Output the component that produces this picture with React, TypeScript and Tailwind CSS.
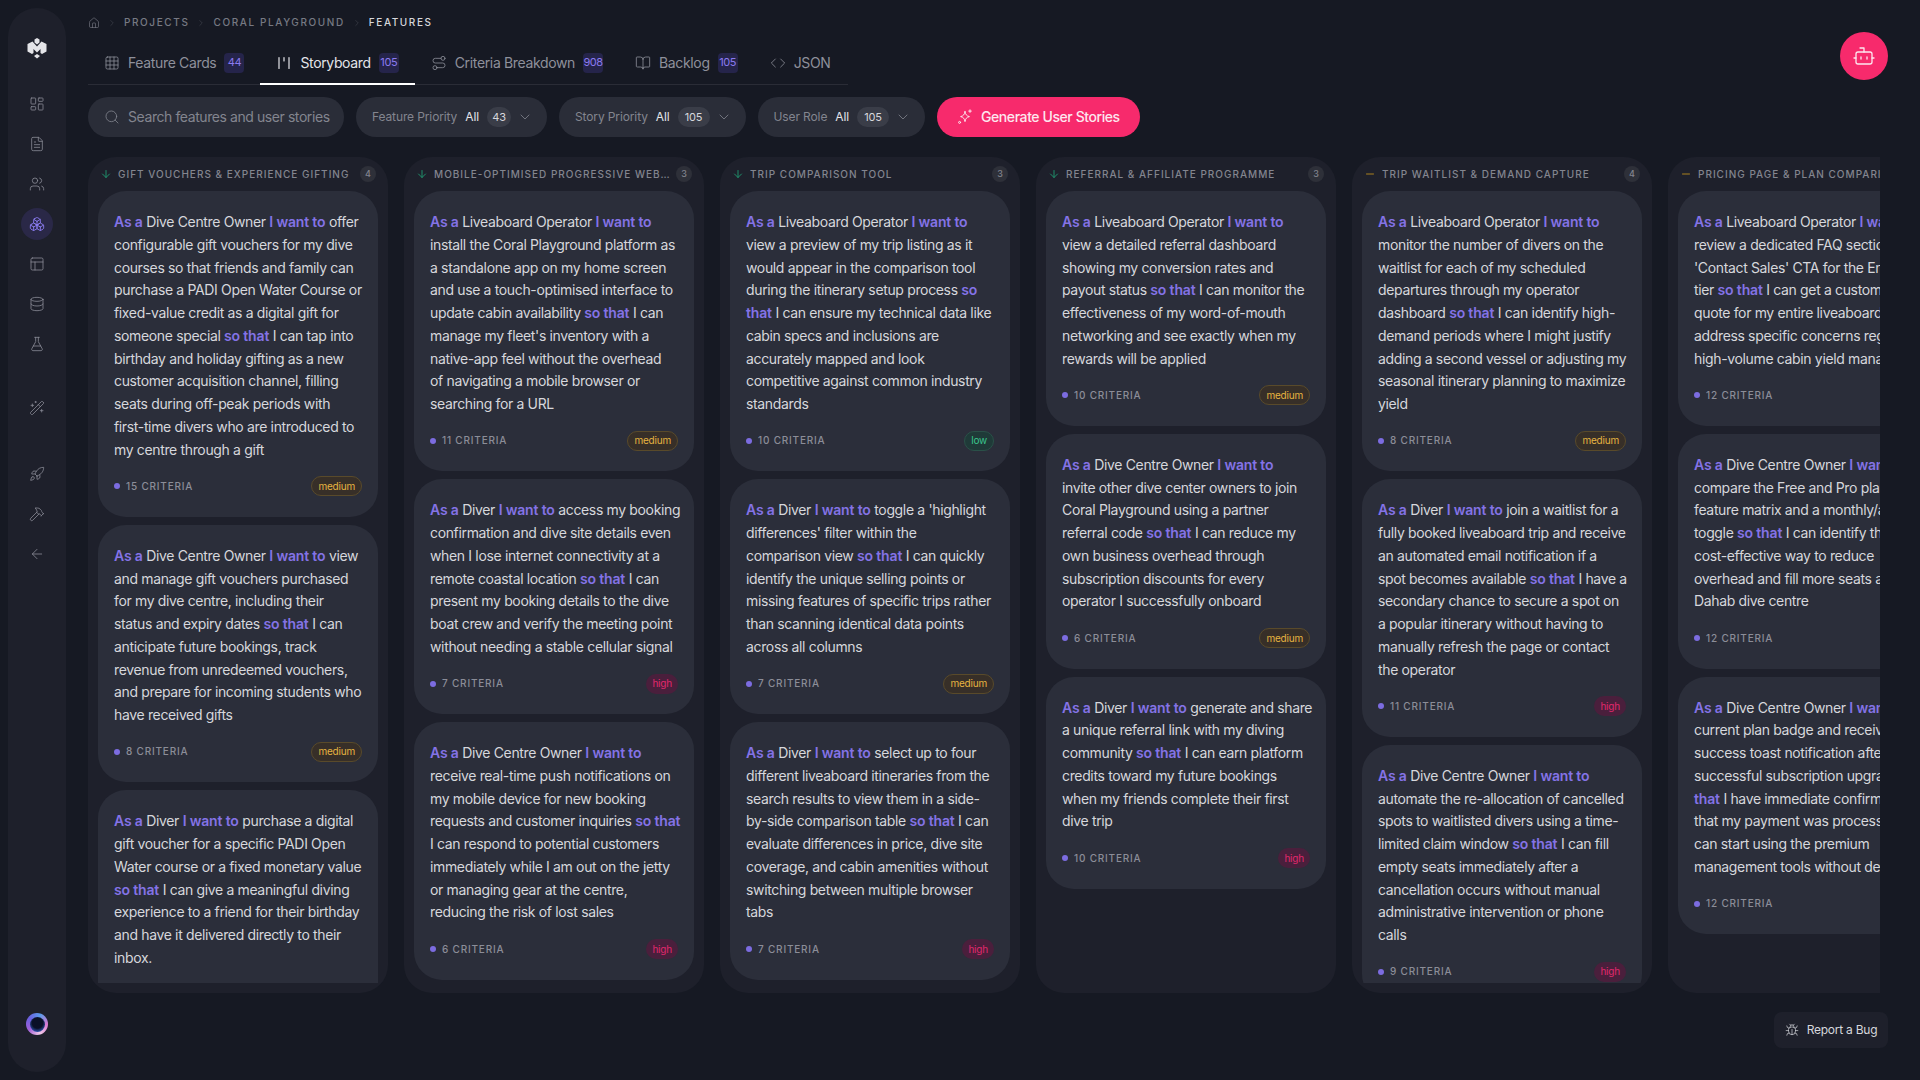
import React from "react";
import {
  ArrowDown, ArrowLeft, Bot, BookOpen, Boxes, Bug, ChevronDown, ChevronRight, Code, Database, FileText, FlaskConical, Grid3x3, Hammer, House,
  LayoutDashboard, Minus, PanelsTopLeft, Rocket, Route, Search, Users, WandSparkles,
} from "lucide-react";

type P = "low" | "medium" | "high";
type Story = { lines: string[]; n: number; p: P };
type Col = { title: string; count: number; icon: "down" | "flat"; stories: Story[] };

const columns: Col[] = [
  { title: "Gift Vouchers & Experience Gifting", count: 4, icon: "down", stories: [
    { n: 15, p: "medium", lines: ["*As a* Dive Centre Owner *I want to* offer", "configurable gift vouchers for my dive", "courses so that friends and family can", "purchase a PADI Open Water Course or", "fixed-value credit as a digital gift for", "someone special *so that* I can tap into", "birthday and holiday gifting as a new", "customer acquisition channel, filling", "seats during off-peak periods with", "first-time divers who are introduced to", "my centre through a gift"] },
    { n: 8, p: "medium", lines: ["*As a* Dive Centre Owner *I want to* view", "and manage gift vouchers purchased", "for my dive centre, including their", "status and expiry dates *so that* I can", "anticipate future bookings, track", "revenue from unredeemed vouchers,", "and prepare for incoming students who", "have received gifts"] },
    { n: 9, p: "medium", lines: ["*As a* Diver *I want to* purchase a digital", "gift voucher for a specific PADI Open", "Water course or a fixed monetary value", "*so that* I can give a meaningful diving", "experience to a friend for their birthday", "and have it delivered directly to their", "inbox."] },
  ] },
  { title: "Mobile-Optimised Progressive Web App (PWA)", count: 3, icon: "down", stories: [
    { n: 11, p: "medium", lines: ["*As a* Liveaboard Operator *I want to*", "install the Coral Playground platform as", "a standalone app on my home screen", "and use a touch-optimised interface to", "update cabin availability *so that* I can", "manage my fleet's inventory with a", "native-app feel without the overhead", "of navigating a mobile browser or", "searching for a URL"] },
    { n: 7, p: "high", lines: ["*As a* Diver *I want to* access my booking", "confirmation and dive site details even", "when I lose internet connectivity at a", "remote coastal location *so that* I can", "present my booking details to the dive", "boat crew and verify the meeting point", "without needing a stable cellular signal"] },
    { n: 6, p: "high", lines: ["*As a* Dive Centre Owner *I want to*", "receive real-time push notifications on", "my mobile device for new booking", "requests and customer inquiries *so that*", "I can respond to potential customers", "immediately while I am out on the jetty", "or managing gear at the centre,", "reducing the risk of lost sales"] },
  ] },
  { title: "Trip Comparison Tool", count: 3, icon: "down", stories: [
    { n: 10, p: "low", lines: ["*As a* Liveaboard Operator *I want to*", "view a preview of my trip listing as it", "would appear in the comparison tool", "during the itinerary setup process *so*", "*that* I can ensure my technical data like", "cabin specs and inclusions are", "accurately mapped and look", "competitive against common industry", "standards"] },
    { n: 7, p: "medium", lines: ["*As a* Diver *I want to* toggle a 'highlight", "differences' filter within the", "comparison view *so that* I can quickly", "identify the unique selling points or", "missing features of specific trips rather", "than scanning identical data points", "across all columns"] },
    { n: 7, p: "high", lines: ["*As a* Diver *I want to* select up to four", "different liveaboard itineraries from the", "search results to view them in a side-", "by-side comparison table *so that* I can", "evaluate differences in price, dive site", "coverage, and cabin amenities without", "switching between multiple browser", "tabs"] },
  ] },
  { title: "Referral & Affiliate Programme", count: 3, icon: "down", stories: [
    { n: 10, p: "medium", lines: ["*As a* Liveaboard Operator *I want to*", "view a detailed referral dashboard", "showing my conversion rates and", "payout status *so that* I can monitor the", "effectiveness of my word-of-mouth", "networking and see exactly when my", "rewards will be applied"] },
    { n: 6, p: "medium", lines: ["*As a* Dive Centre Owner *I want to*", "invite other dive center owners to join", "Coral Playground using a partner", "referral code *so that* I can reduce my", "own business overhead through", "subscription discounts for every", "operator I successfully onboard"] },
    { n: 10, p: "high", lines: ["*As a* Diver *I want to* generate and share", "a unique referral link with my diving", "community *so that* I can earn platform", "credits toward my future bookings", "when my friends complete their first", "dive trip"] },
  ] },
  { title: "Trip Waitlist & Demand Capture", count: 4, icon: "flat", stories: [
    { n: 8, p: "medium", lines: ["*As a* Liveaboard Operator *I want to*", "monitor the number of divers on the", "waitlist for each of my scheduled", "departures through my operator", "dashboard *so that* I can identify high-", "demand periods where I might justify", "adding a second vessel or adjusting my", "seasonal itinerary planning to maximize", "yield"] },
    { n: 11, p: "high", lines: ["*As a* Diver *I want to* join a waitlist for a", "fully booked liveaboard trip and receive", "an automated email notification if a", "spot becomes available *so that* I have a", "secondary chance to secure a spot on", "a popular itinerary without having to", "manually refresh the page or contact", "the operator"] },
    { n: 9, p: "high", lines: ["*As a* Dive Centre Owner *I want to*", "automate the re-allocation of cancelled", "spots to waitlisted divers using a time-", "limited claim window *so that* I can fill", "empty seats immediately after a", "cancellation occurs without manual", "administrative intervention or phone", "calls"] },
  ] },
  { title: "Pricing Page & Plan Comparison", count: 3, icon: "flat", stories: [
    { n: 12, p: "medium", lines: ["*As a* Liveaboard Operator *I want to*", "review a dedicated FAQ section and a", "'Contact Sales' CTA for the Enterprise", "tier *so that* I can get a custom", "quote for my entire liveaboard fleet", "address specific concerns regarding", "high-volume cabin yield management"] },
    { n: 12, p: "medium", lines: ["*As a* Dive Centre Owner *I want to*", "compare the Free and Pro plans in a", "feature matrix and a monthly/annual", "toggle *so that* I can identify the most", "cost-effective way to reduce", "overhead and fill more seats at my", "Dahab dive centre"] },
    { n: 12, p: "medium", lines: ["*As a* Dive Centre Owner *I want to* see my", "current plan badge and receive a", "success toast notification after a", "successful subscription upgrade *so*", "*that* I have immediate confirmation", "that my payment was processed and I", "can start using the premium", "management tools without delay"] },
  ] },
];

function Line({ text }: { text: string }) {
  const parts = text.split("*");
  return (
    <span className="block whitespace-nowrap">
      {parts.map((part, i) =>
        i % 2 === 1 ? (
          <span key={i} className="font-semibold tracking-[-0.012em] text-[#8473e6]">{part}</span>
        ) : (
          <span key={i}>{part}</span>
        )
      )}
    </span>
  );
}

function PriorityBadge({ p }: { p: P }) {
  if (p === "medium")
    return <span className="flex h-5 items-center rounded-full border border-[#594a2a] bg-[#372f28] px-[6px] text-[10px] tracking-[-0.02em] text-[#e6b341]">medium</span>;
  if (p === "high")
    return <span className="flex h-5 items-center rounded-full bg-[#4a1f3c] px-[6px] text-[10px] tracking-[-0.02em] text-[#e0286c]">high</span>;
  return <span className="flex h-5 items-center rounded-full border border-[#2a5048] bg-[#1f3a38] px-[6px] text-[10px] tracking-[-0.02em] text-[#3ac48c]">low</span>;
}

function StoryCard({ s }: { s: Story }) {
  return (
    <div className="shrink-0 rounded-[28px] bg-[#2b2e3a] px-4 pt-5 pb-[20.5px]">
      <p className="text-sm leading-[22.75px] tracking-[-0.025em] text-[#d6d7dc]">
        {s.lines.map((l, i) => <Line key={i} text={l} />)}
      </p>
      <div className="mt-[15px] flex h-5 items-center justify-between">
        <div className="flex items-center gap-[6px] text-[10px] font-medium tracking-[0.08em] text-[#8b8d98]">
          <span className="h-[6px] w-[6px] rounded-full bg-[#7c6ce0]" />
          <span>{s.n} CRITERIA</span>
        </div>
        <PriorityBadge p={s.p} />
      </div>
    </div>
  );
}

function Column({ c }: { c: Col }) {
  return (
    <div className="flex h-full w-[300px] shrink-0 flex-col overflow-hidden rounded-[28px] bg-[#1e202b] px-[10px] pb-[10px]">
      <div className="flex h-[34px] shrink-0 items-center pr-[2px]">
        <span className="flex w-5 shrink-0 items-center pl-[2px]">
          {c.icon === "down" ? (
            <ArrowDown size={12} strokeWidth={1.8} className="text-[#1f9b72]" />
          ) : (
            <Minus size={12} strokeWidth={2} className="text-[#a9801f]" />
          )}
        </span>
        <span className="min-w-0 flex-1 truncate text-[10px] font-medium uppercase tracking-[0.1em] text-[#83858f]">{c.title}</span>
        <span className="ml-[6px] flex h-4 w-4 shrink-0 items-center justify-center rounded-full bg-[#2e3039] text-[9px] font-medium text-[#83858f]">{c.count}</span>
      </div>
      <div className="flex min-h-0 flex-1 flex-col gap-2 overflow-hidden">
        {c.stories.map((s, i) => <StoryCard key={i} s={s} />)}
      </div>
    </div>
  );
}

function StoryboardIcon() {
  return (
    <svg width="16" height="16" viewBox="0 0 16 16" fill="none" stroke="currentColor" strokeWidth="1.2" strokeLinecap="round">
      <path d="M3 2.5v11M8 2.5v3.5M13 2.5v11" />
    </svg>
  );
}

function GenIcon() {
  return (
    <svg width="16" height="16" viewBox="0 0 16 16" fill="none" stroke="currentColor" strokeWidth="1" strokeLinejoin="round" strokeLinecap="round">
      <path d="M8 2.600c.5 3 1.600 4.400 4.400 5-2.800.6-3.900 2-4.400 5-.5-3-1.600-4.400-4.400-5 2.800-.6 3.900-2 4.400-5z" />
      <path d="M13 .8v2.600M11.700 2.100h2.600" />
      <circle cx="2.600" cy="13.400" r="1" />
    </svg>
  );
}

function Logo() {
  return (
    <svg width="20" height="21" viewBox="0 0 20 21" fill="#e4e4e8">
      <path d="M10 0l2.500 1.500v3L10 6.500l-2.500-2v-3z" />
      <path d="M.5 6l5-2.500L10 8.500l4.500-5 5 2.500v7.500L15 16l-1.500-1v-4L10 14.500 6.500 11v4L5 16 .5 13.500z" />
      <path d="M10 16l3 2-3 2.500L7 18z" />
    </svg>
  );
}

function Tab({ icon, label, badge, active }: { icon: React.ReactNode; label: string; badge?: number; active?: boolean }) {
  return (
    <div className={"-mb-px flex h-10 shrink-0 items-center gap-2 whitespace-nowrap border-b-2 px-4 pb-[3px] text-sm tracking-[-0.025em] " + (active ? "border-white text-[#e4e5e9]" : "border-transparent text-[#8e909b]")}>
      {icon}
      <span>{label}</span>
      {badge !== undefined && (
        <span className="flex h-5 min-w-5 items-center justify-center rounded-[4px] bg-[#25244a] text-[11px] tracking-[-0.04em] text-[#8a7af0]">{badge}</span>
      )}
    </div>
  );
}

function Filter({ label, count }: { label: string; count: number }) {
  return (
    <div className="flex h-10 items-center rounded-full bg-[#2a2d38] pr-[14px] pl-4 text-xs tracking-[-0.01em]">
      <span className="text-[#83858f]">{label}</span>
      <span className="ml-2 text-[#e4e5e9]">All</span>
      <span className={"ml-2 flex h-5 items-center justify-center rounded-full bg-[#3a3d48] text-[11px] text-[#d6d7dc] " + (count > 99 ? "w-8" : "w-6")}>{count}</span>
      <ChevronDown size={16} strokeWidth={1.2} className="ml-[6px] text-[#83858f]" />
    </div>
  );
}

const sideIcon = "flex h-8 w-8 items-center justify-center text-[#8a8c97]";

export default function App() {
  return (
    <div className="relative flex h-screen w-screen overflow-hidden bg-[#161923] font-['Inter',sans-serif]">
      <aside className="mt-2 mb-2 ml-2 flex w-[58px] shrink-0 flex-col items-center rounded-full bg-[#1e202b]">
        <div className="mt-[30px] h-[21px]"><Logo /></div>
        <div className="mt-[29px] flex flex-col gap-2">
          <div className={sideIcon}><LayoutDashboard size={16} strokeWidth={1.2} /></div>
          <div className={sideIcon}><FileText size={16} strokeWidth={1.2} /></div>
          <div className={sideIcon}><Users size={16} strokeWidth={1.2} /></div>
          <div className="flex h-8 w-8 items-center justify-center rounded-full bg-[#2a2847] text-[#8b7cf0]"><Boxes size={16} strokeWidth={1.4} /></div>
          <div className={sideIcon}><PanelsTopLeft size={16} strokeWidth={1.2} /></div>
          <div className={sideIcon}><Database size={16} strokeWidth={1.2} /></div>
          <div className={sideIcon}><FlaskConical size={16} strokeWidth={1.2} /></div>
        </div>
        <div className={"mt-8 " + sideIcon}><WandSparkles size={16} strokeWidth={1.2} /></div>
        <div className="mt-[34px] flex flex-col gap-2">
          <div className={sideIcon}><Rocket size={16} strokeWidth={1.2} /></div>
          <div className={sideIcon}><Hammer size={16} strokeWidth={1.2} /></div>
          <div className={sideIcon}><ArrowLeft size={16} strokeWidth={1.2} /></div>
        </div>
        <div className="mt-auto mb-[37px] flex h-[22px] w-[22px] items-center justify-center rounded-full bg-[conic-gradient(from_20deg,#5a9bea,#d977d0,#f0c8e8,#a05fd8,#6a60e0,#5a9bea)]">
          <div className="h-[15px] w-[15px] rounded-full bg-[radial-gradient(circle_at_50%_40%,#0a1026_45%,#2c4fa8_75%,#b05fd0_100%)]" />
        </div>
      </aside>

      <main className="ml-[22px] flex w-[1792px] shrink-0 flex-col">
        <nav className="mt-4 flex h-[13px] items-center text-[10px] font-medium tracking-[0.16em] text-[#777983]">
          <House size={12} strokeWidth={1.3} />
          <ChevronRight size={10} strokeWidth={1.2} className="mx-[7px] text-[#4a4c56]" />
          <span>PROJECTS</span>
          <ChevronRight size={10} strokeWidth={1.2} className="mx-[7px] text-[#4a4c56]" />
          <span>CORAL PLAYGROUND</span>
          <ChevronRight size={10} strokeWidth={1.2} className="mx-[7px] text-[#4a4c56]" />
          <span className="text-[#d6d7dc]">FEATURES</span>
        </nav>

        <div className="mt-4 flex h-10 w-[760px] border-b border-[#2a2c36]">
          <Tab icon={<Grid3x3 size={16} strokeWidth={1.2} />} label="Feature Cards" badge={44} />
          <Tab icon={<StoryboardIcon />} label="Storyboard" badge={105} active />
          <Tab icon={<Route size={16} strokeWidth={1.2} />} label="Criteria Breakdown" badge={908} />
          <Tab icon={<BookOpen size={16} strokeWidth={1.2} />} label="Backlog" badge={105} />
          <Tab icon={<Code size={16} strokeWidth={1.2} />} label="JSON" />
        </div>

        <div className="mt-3 flex items-center gap-3">
          <div className="flex h-10 w-[256px] items-center gap-2 rounded-full bg-[#2a2d38] pl-4 text-sm tracking-[-0.03em] text-[#83858f]">
            <Search size={16} strokeWidth={1.2} />
            <span className="whitespace-nowrap">Search features and user stories</span>
          </div>
          <Filter label="Feature Priority" count={43} />
          <Filter label="Story Priority" count={105} />
          <Filter label="User Role" count={105} />
          <div className="flex h-10 items-center gap-2 rounded-full bg-[#f72a6c] px-5 text-sm font-medium tracking-[-0.03em] text-[#fde7ef]">
            <GenIcon />
            <span>Generate User Stories</span>
          </div>
        </div>

        <div className="mt-5 flex h-[836px] gap-4 overflow-hidden">
          {columns.map((c) => <Column key={c.title} c={c} />)}
        </div>
      </main>

      <div className="absolute top-8 right-8 flex h-12 w-12 items-center justify-center rounded-full bg-[#f72a6c] text-[#fde7ef]">
        <Bot size={24} strokeWidth={1.3} />
      </div>
      <div className="absolute right-8 bottom-8 flex h-9 w-[114px] items-center justify-center gap-2 rounded-lg bg-[#1e202b] text-xs tracking-[-0.02em] text-[#d6d7dc]">
        <Bug size={14} strokeWidth={1.2} />
        <span>Report a Bug</span>
      </div>
    </div>
  );
}
